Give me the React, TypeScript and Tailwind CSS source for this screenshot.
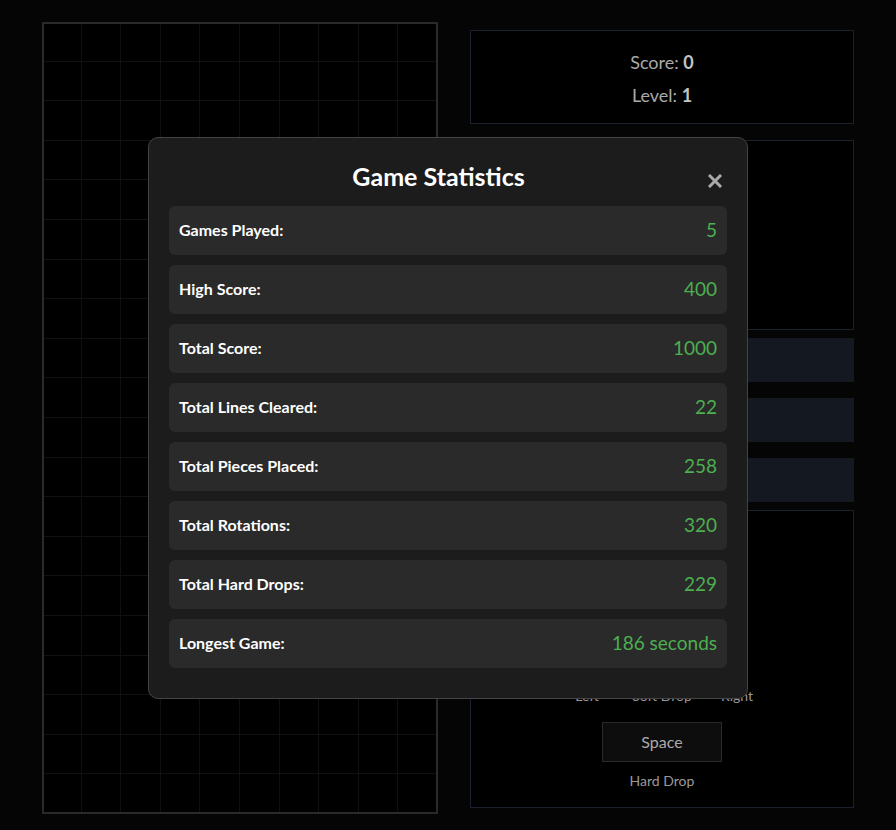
import React from "react";

const stats: [string, string][] = [
  ["Games Played:", "5"],
  ["High Score:", "400"],
  ["Total Score:", "1000"],
  ["Total Lines Cleared:", "22"],
  ["Total Pieces Placed:", "258"],
  ["Total Rotations:", "320"],
  ["Total Hard Drops:", "229"],
  ["Longest Game:", "186 seconds"],
];

function Board() {
  const cells = Array.from({ length: 200 });
  return (
    <div className="relative w-[396px] h-[792px] bg-black shrink-0">
      <div className="grid grid-cols-10 grid-rows-[repeat(20,minmax(0,1fr))] w-full h-full">
        {cells.map((_, i) => (
          <div key={i} className="border-r border-b border-[#101010]" />
        ))}
      </div>
      <div className="absolute inset-0 border-2 border-[#2a2a2a]" />
    </div>
  );
}

function SidePanel() {
  return (
    <div className="w-[384px] mt-2 flex flex-col text-[#aaaaaa]">
      <div className="h-[94px] border border-[#1b2030] bg-black flex flex-col items-center justify-center gap-[8px] pt-[3px] text-[18px] leading-[25px]">
        <div>
          Score: <span className="font-bold text-[#c4c4c4]">0</span>
        </div>
        <div>
          Level: <span className="font-bold text-[#c4c4c4]">1</span>
        </div>
      </div>
      <div className="h-[190px] mt-[16px] border border-[#1b2030] bg-black flex flex-col items-center pt-3">
        <div className="text-[16px]">Next</div>
      </div>
      <button className="h-[44px] mt-[8px] bg-[#131821] text-[#cccccc] text-[15px]">Pause</button>
      <button className="h-[44px] mt-[16px] bg-[#131821] text-[#cccccc] text-[15px]">Restart</button>
      <button className="h-[44px] mt-[16px] bg-[#131821] text-[#cccccc] text-[15px]">Statistics</button>
      <div className="h-[298px] mt-[8px] border border-[#1b2030] bg-black flex flex-col items-center pb-[17px]">
        <div className="mt-4 text-[16px]">Controls</div>
        <div className="mt-auto flex items-center gap-[15px] text-[14px] leading-[18px] text-[#999999]">
          <span className="w-[60px] text-center">Left</span>
          <span className="w-[60px] text-center">Soft Drop</span>
          <span className="w-[60px] text-center">Right</span>
        </div>
        <div className="mt-[17px] w-[120px] h-[40px] bg-[#0d0d0d] border border-[#2a2a2a] flex items-center justify-center text-[16px] text-[#aaaaaa]">
          Space
        </div>
        <div className="mt-[10px] text-[14px] leading-[18px] text-[#999999]">Hard Drop</div>
      </div>
    </div>
  );
}

function StatsModal() {
  return (
    <div className="fixed inset-0 flex items-center justify-center pt-[5px]">
      <div className="w-[600px] bg-[#1c1c1c] border border-[#444444] rounded-[10px] px-5 pt-5 pb-[30px]">
        <div className="flex items-center mb-3">
          <h2 className="flex-1 text-center text-white font-bold text-[25px] leading-9">Game Statistics</h2>
          <button className="w-[19px] h-9 pt-[10px] flex items-center justify-start text-[#aaaaaa]">
            <svg width="14" height="14" viewBox="0 0 14 14">
              <path d="M2 2 L12 12 M12 2 L2 12" stroke="currentColor" strokeWidth="3" strokeLinecap="square" />
            </svg>
          </button>
        </div>
        <div className="flex flex-col gap-[10px]">
          {stats.map(([label, value]) => (
            <div
              key={label}
              className="h-[49px] bg-[#2a2a2a] rounded-[6px] px-[10px] flex items-center justify-between"
            >
              <span className="text-white font-bold text-[16px]">{label}</span>
              <span className="text-[#4caf50] text-[19px]">{value}</span>
            </div>
          ))}
        </div>
      </div>
    </div>
  );
}

export default function App() {
  return (
    <div className="min-h-[830px] bg-[#050505] font-['Lato',sans-serif]">
      <div className="flex justify-center items-start gap-8 pt-[22px]">
        <Board />
        <SidePanel />
      </div>
      <StatsModal />
    </div>
  );
}
